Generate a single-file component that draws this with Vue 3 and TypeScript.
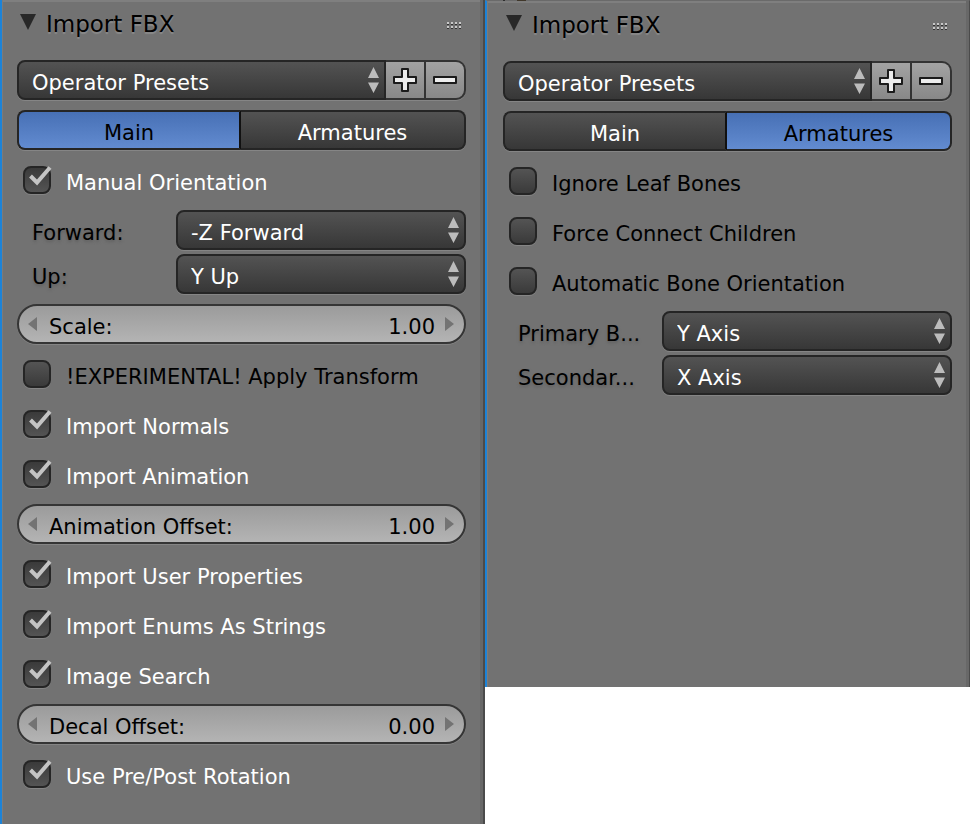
<script setup lang="ts">
import { reactive } from 'vue'

type Tab = 'Main' | 'Armatures'

interface CheckRow { kind: 'check'; id: string; label: string; value: boolean }
interface NumberRow { kind: 'number'; id: string; label: string; value: string }
interface MenuItem { id: string; label: string; value: string; options: string[] }
interface MenuRow { kind: 'menus'; id: string; items: MenuItem[] }
type Row = CheckRow | NumberRow | MenuRow

interface Panel { id: string; active: Tab; rows: Record<Tab, Row[]> }

const check = (id: string, label: string, value: boolean): CheckRow => ({ kind: 'check', id, label, value })
const num = (id: string, label: string, value: string): NumberRow => ({ kind: 'number', id, label, value })

const axes = ['X', 'Y', 'Z', '-X', '-Y', '-Z']
const withSuffix = (suffix: string) => axes.map((axis) => `${axis} ${suffix}`)

function createPanel(id: string, active: Tab): Panel {
  return {
    id,
    active,
    rows: {
      Main: [
        check('manual', 'Manual Orientation', true),
        {
          kind: 'menus',
          id: 'orientation',
          items: [
            { id: 'forward', label: 'Forward:', value: '-Z Forward', options: withSuffix('Forward') },
            { id: 'up', label: 'Up:', value: 'Y Up', options: withSuffix('Up') },
          ],
        },
        num('scale', 'Scale:', '1.00'),
        check('transform', '!EXPERIMENTAL! Apply Transform', false),
        check('normals', 'Import Normals', true),
        check('animation', 'Import Animation', true),
        num('anim-offset', 'Animation Offset:', '1.00'),
        check('user-props', 'Import User Properties', true),
        check('enums', 'Import Enums As Strings', true),
        check('images', 'Image Search', true),
        num('decal', 'Decal Offset:', '0.00'),
        check('rotation', 'Use Pre/Post Rotation', true),
      ],
      Armatures: [
        check('leaf', 'Ignore Leaf Bones', false),
        check('connect', 'Force Connect Children', false),
        check('auto-bone', 'Automatic Bone Orientation', false),
        {
          kind: 'menus',
          id: 'bone-axes',
          items: [
            { id: 'primary', label: 'Primary B...', value: 'Y Axis', options: withSuffix('Axis') },
            { id: 'secondary', label: 'Secondar...', value: 'X Axis', options: withSuffix('Axis') },
          ],
        },
      ],
    },
  }
}

const tabs: Tab[] = ['Main', 'Armatures']
const panels = reactive<Panel[]>([createPanel('left', 'Main'), createPanel('right', 'Armatures')])

function step(row: NumberRow, amount: number) {
  row.value = (Number(row.value) + amount).toFixed(2)
}
</script>

<template>
  <main class="workspace">
    <section v-for="panel in panels" :key="panel.id" class="panel" :class="panel.id">
      <header class="header">
        <svg class="collapse" viewBox="0 0 16 16" aria-hidden="true"><path d="M0 0H16L8 16Z" /></svg>
        <h2 class="title">Import FBX</h2>
        <svg class="grip" viewBox="0 0 15 7" aria-hidden="true">
          <g v-for="n in 4" :key="n">
            <path class="grip-light" :d="`M${n * 4 - 4} 0h2v2h-2zM${n * 4 - 4} 4h2v2h-2z`" />
            <path class="grip-dark" :d="`M${n * 4 - 4} 2h2v1h-2zM${n * 4 - 4} 6h2v1h-2z`" />
          </g>
        </svg>
      </header>

      <div class="body">
        <div class="presets">
          <div class="menu">
            <select class="select joined" aria-label="Operator Presets">
              <option>Operator Presets</option>
            </select>
            <svg class="arrows" viewBox="0 0 11 26" aria-hidden="true"><path d="M0 11L5.500 0L11 11ZM0 15.500H11L5.500 26Z" /></svg>
          </div>
          <button class="tool" type="button" aria-label="Add preset">
            <svg viewBox="0 0 24 24" aria-hidden="true">
              <path class="glyph" d="M9 1H15V9H23V15H15V23H9V15H1V9H9Z" />
            </svg>
          </button>
          <button class="tool last" type="button" aria-label="Remove preset">
            <svg viewBox="0 0 24 24" aria-hidden="true">
              <path class="glyph" d="M1 9H23V15H1Z" />
            </svg>
          </button>
        </div>

        <div class="tabs">
          <button
            v-for="tab in tabs"
            :key="tab"
            type="button"
            class="tab"
            :class="{ active: panel.active === tab }"
            :aria-pressed="panel.active === tab"
            @click="panel.active = tab"
          >{{ tab }}</button>
        </div>

        <template v-for="row in panel.rows[panel.active]" :key="row.id">
          <label v-if="row.kind === 'check'" class="check" :class="{ on: row.value }">
            <span class="box">
              <input v-model="row.value" type="checkbox" class="tick" />
              <svg v-if="row.value" class="mark" viewBox="0 0 28 28" aria-hidden="true"><path d="M7.500 10L14 16.500L27 1.500" /></svg>
            </span>
            <span class="check-text">{{ row.label }}</span>
          </label>

          <div v-else-if="row.kind === 'number'" class="number">
            <button class="nudge" type="button" :aria-label="`Decrease ${row.label}`" @click="step(row, -1)">
              <svg viewBox="0 0 9 14" aria-hidden="true"><path d="M9 0V14L0 7Z" /></svg>
            </button>
            <label class="number-label" :for="`${panel.id}-${row.id}`">{{ row.label }}</label>
            <input :id="`${panel.id}-${row.id}`" v-model="row.value" class="number-input" type="text" inputmode="decimal" />
            <button class="nudge" type="button" :aria-label="`Increase ${row.label}`" @click="step(row, 1)">
              <svg viewBox="0 0 9 14" aria-hidden="true"><path d="M0 0V14L9 7Z" /></svg>
            </button>
          </div>

          <div v-else class="menus">
            <div v-for="item in row.items" :key="item.id" class="menu-row">
              <label class="menu-label" :for="`${panel.id}-${item.id}`">{{ item.label }}</label>
              <div class="menu">
                <select :id="`${panel.id}-${item.id}`" v-model="item.value" class="select">
                  <option v-for="option in item.options" :key="option">{{ option }}</option>
                </select>
                <svg class="arrows" viewBox="0 0 11 26" aria-hidden="true"><path d="M0 11L5.500 0L11 11ZM0 15.500H11L5.500 26Z" /></svg>
              </div>
            </div>
          </div>
        </template>
      </div>
    </section>
  </main>
</template>

<style>
body {
  background: #fff;
}
</style>

<style scoped>
* {
  box-sizing: border-box;
}

.workspace {
  display: grid;
  grid-template-columns: repeat(2, minmax(0, 1fr));
  align-items: start;
  font-family: 'DejaVu Sans', sans-serif;
  font-size: 21px;
  color: #000;
}

.panel {
  padding: 0 17px 30px 15px;
  background: #727272;
  border-left: 2px solid #1c83d8;
  border-right: 2px solid #4b4b4b;
  box-shadow: inset -3px 0 #686868, inset 1px 0 #7b7b7b, inset 0 2px #7f7f7f;
}

.panel.left {
  min-height: 100vh;
}

.panel.right {
  padding-right: 17px;
  padding-left: 16px;
  padding-bottom: 292px;
  border-top: 1px solid transparent;
  border-right-width: 1px;
  background:
    linear-gradient(90deg, #6a6a6a 18px, #2e2e2e 18px 20px, #6a6a6a 20px 32px, #40372a 32px 41px, #6a6a6a 41px) 0 0 / 100% 1px no-repeat border-box,
    #727272;
}

.header {
  display: flex;
  align-items: flex-start;
  height: 60px;
  padding: 14px 4px 0 3px;
}

.collapse {
  width: 16px;
  height: 16px;
  fill: #282828;
}

.title {
  flex: 1;
  margin: 0 0 0 10px;
  font-size: 23px;
  font-weight: 400;
  line-height: 20px;
  text-shadow: 0 2px 1px #8a8a8a;
}

.grip {
  width: 15px;
  height: 7px;
  margin-top: 8px;
}

.grip-light {
  fill: #c8c8c8;
}

.grip-dark {
  fill: #333;
}

.body {
  display: flex;
  flex-direction: column;
  gap: 10px;
}

button,
select,
input {
  margin: 0;
  font: inherit;
  color: inherit;
}

.presets {
  display: flex;
}

.menu {
  position: relative;
  flex: 1;
  min-width: 0;
}

.select {
  display: block;
  width: 100%;
  height: 40px;
  padding: 5px 30px 0 13px;
  appearance: none;
  color: #fff;
  background: linear-gradient(#535353, #373737);
  border: 2px solid #252525;
  border-radius: 8px;
  box-shadow: 0 1px #858585;
}

.select.joined {
  border-radius: 8px 0 0 8px;
}

.arrows {
  position: absolute;
  top: 7px;
  right: 7px;
  width: 11px;
  height: 26px;
  fill: #bcbcbc;
  pointer-events: none;
}

.tool {
  display: flex;
  align-items: center;
  justify-content: center;
  width: 40px;
  height: 40px;
  padding: 0;
  background: linear-gradient(#a3a3a3, #888);
  border: 2px solid #333;
  border-left-width: 0;
  box-shadow: 0 1px #858585;
}

.tool.last {
  border-radius: 0 10px 10px 0;
}

.tool svg {
  width: 24px;
  height: 24px;
}

.glyph {
  fill: #ededed;
  stroke: #1b1b1b;
  stroke-width: 2;
  stroke-linejoin: round;
}

.tabs {
  display: grid;
  grid-template-columns: 224fr 225fr;
}

.tab {
  height: 40px;
  padding: 5px 0 0;
  color: #fff;
  background: linear-gradient(#535353, #373737);
  border: 2px solid #252525;
  box-shadow: 0 1px #858585;
}

.tab:first-child {
  border-right-color: #111;
  border-radius: 8px 0 0 8px;
}

.tab:last-child {
  border-left: 0;
  border-radius: 0 8px 8px 0;
}

.tab.active {
  color: #000;
  background: linear-gradient(#4770b5, #628bd0);
}

.check {
  display: flex;
  align-items: center;
  gap: 15px;
  height: 40px;
  padding-left: 6px;
}

.check.on {
  color: #fff;
}

.check-text {
  padding-top: 5px;
  white-space: nowrap;
}

.box {
  position: relative;
  width: 28px;
  height: 28px;
}

.tick {
  display: block;
  width: 28px;
  height: 28px;
  appearance: none;
  background: linear-gradient(#545454, #3a3a3a);
  border: 2px solid #252525;
  border-radius: 8px;
  box-shadow: 0 1px #858585;
}

.tick:checked {
  background: linear-gradient(#3a3a3a, #545454);
}

.mark {
  position: absolute;
  inset: 0;
  overflow: visible;
  fill: none;
  stroke: #c4c4c4;
  stroke-width: 4;
  pointer-events: none;
}

.number {
  display: flex;
  align-items: center;
  height: 40px;
  padding: 0 10px 0 9px;
  background: linear-gradient(#9b9b9b, #b4b4b4);
  border: 2px solid #353535;
  border-radius: 20px;
  box-shadow: 0 1px #858585;
}

.number-label {
  padding: 5px 0 0 12px;
  white-space: nowrap;
}

.number-input {
  flex: 1;
  min-width: 0;
  height: 36px;
  padding: 5px 10px 0 0;
  text-align: right;
  background: none;
  border: 0;
  outline: 0;
}

.nudge {
  display: flex;
  padding: 0;
  background: none;
  border: 0;
}

.nudge svg {
  width: 9px;
  height: 14px;
  fill: #737373;
}

.menus {
  display: flex;
  flex-direction: column;
  gap: 4px;
}

.menu-row {
  display: grid;
  grid-template-columns: 159fr 290fr;
  align-items: center;
}

.menu-label {
  padding: 5px 0 0 15px;
  white-space: nowrap;
  text-shadow: 0 2px 3px #606060;
}
</style>
